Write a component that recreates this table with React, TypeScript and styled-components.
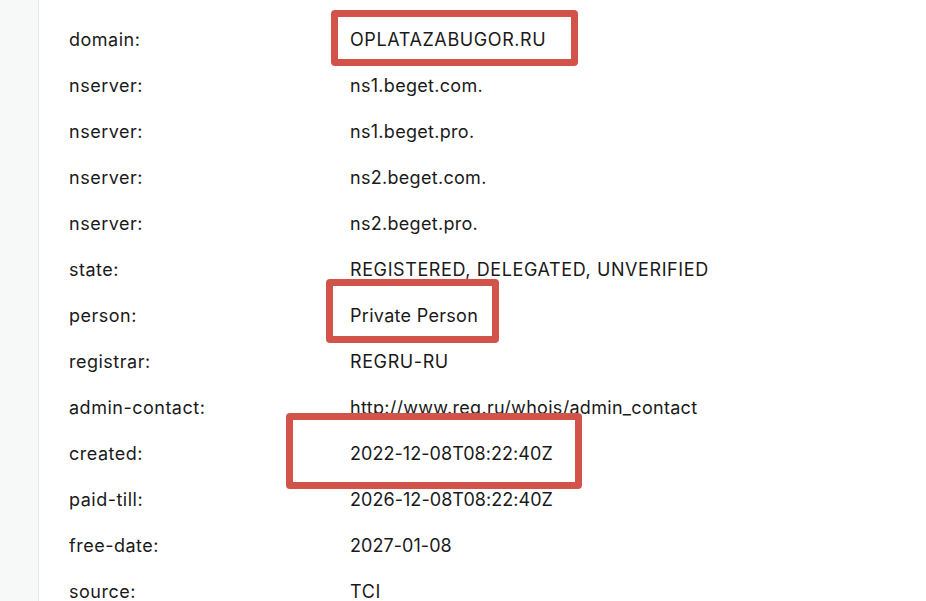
import React from "react";
import styled, { createGlobalStyle } from "styled-components";

const Global = createGlobalStyle`
  html, body { margin: 0; padding: 0; background: #ffffff; }
  body { width: 926px; height: 601px; overflow: hidden; }
`;

const Page = styled.div`
  display: flex;
  width: 926px;
  height: 601px;
  overflow: hidden;
`;

const Sidebar = styled.div`
  width: 38px;
  flex: none;
  background: #f7f9f9;
  border-right: 1px solid #e4e9e9;
`;

const Main = styled.div`
  position: relative;
  flex: 1;
  padding: 16px 0 0 30px;
`;

const Table = styled.div`
  display: grid;
  grid-template-columns: 281px auto;
  grid-auto-rows: 46.08px;
  align-items: center;
  font-family: Inter, "Liberation Sans", sans-serif;
  font-size: 18px;
  letter-spacing: 0.5px;
  color: #1a1a1a;
`;

const Label = styled.div`
  white-space: nowrap;
`;

type Kind = "caps" | "lower" | "num";
const spacing: Record<Kind, string> = { caps: "0.6px", lower: "0.3px", num: "0.05px" };

const Value = styled.div<{ $kind: Kind }>`
  white-space: nowrap;
  letter-spacing: ${(p) => spacing[p.$kind]};
`;

const Mark = styled.div<{ $x: number; $y: number; $w: number; $h: number }>`
  position: absolute;
  left: ${(p) => p.$x}px;
  top: ${(p) => p.$y}px;
  width: ${(p) => p.$w}px;
  height: ${(p) => p.$h}px;
  box-sizing: border-box;
  border: 7px solid #d1534a;
  border-radius: 4px;
`;

const rows: [string, string, Kind][] = [
  ["domain:", "OPLATAZABUGOR.RU", "caps"],
  ["nserver:", "ns1.beget.com.", "lower"],
  ["nserver:", "ns1.beget.pro.", "lower"],
  ["nserver:", "ns2.beget.com.", "lower"],
  ["nserver:", "ns2.beget.pro.", "lower"],
  ["state:", "REGISTERED, DELEGATED, UNVERIFIED", "caps"],
  ["person:", "Private Person", "lower"],
  ["registrar:", "REGRU-RU", "caps"],
  ["admin-contact:", "http://www.reg.ru/whois/admin_contact", "lower"],
  ["created:", "2022-12-08T08:22:40Z", "num"],
  ["paid-till:", "2026-12-08T08:22:40Z", "num"],
  ["free-date:", "2027-01-08", "num"],
  ["source:", "TCI", "caps"],
];

export default function App() {
  return (
    <Page>
      <Global />
      <Sidebar />
      <Main>
        <Table>
          {rows.map(([k, v, kind], i) => (
            <React.Fragment key={i}>
              <Label>{k}</Label>
              <Value $kind={kind}>{v}</Value>
            </React.Fragment>
          ))}
        </Table>
        <Mark $x={331 - 39} $y={10} $w={247} $h={56} />
        <Mark $x={326 - 39} $y={279} $w={173} $h={64} />
        <Mark $x={286 - 39} $y={413} $w={296} $h={76} />
      </Main>
    </Page>
  );
}
